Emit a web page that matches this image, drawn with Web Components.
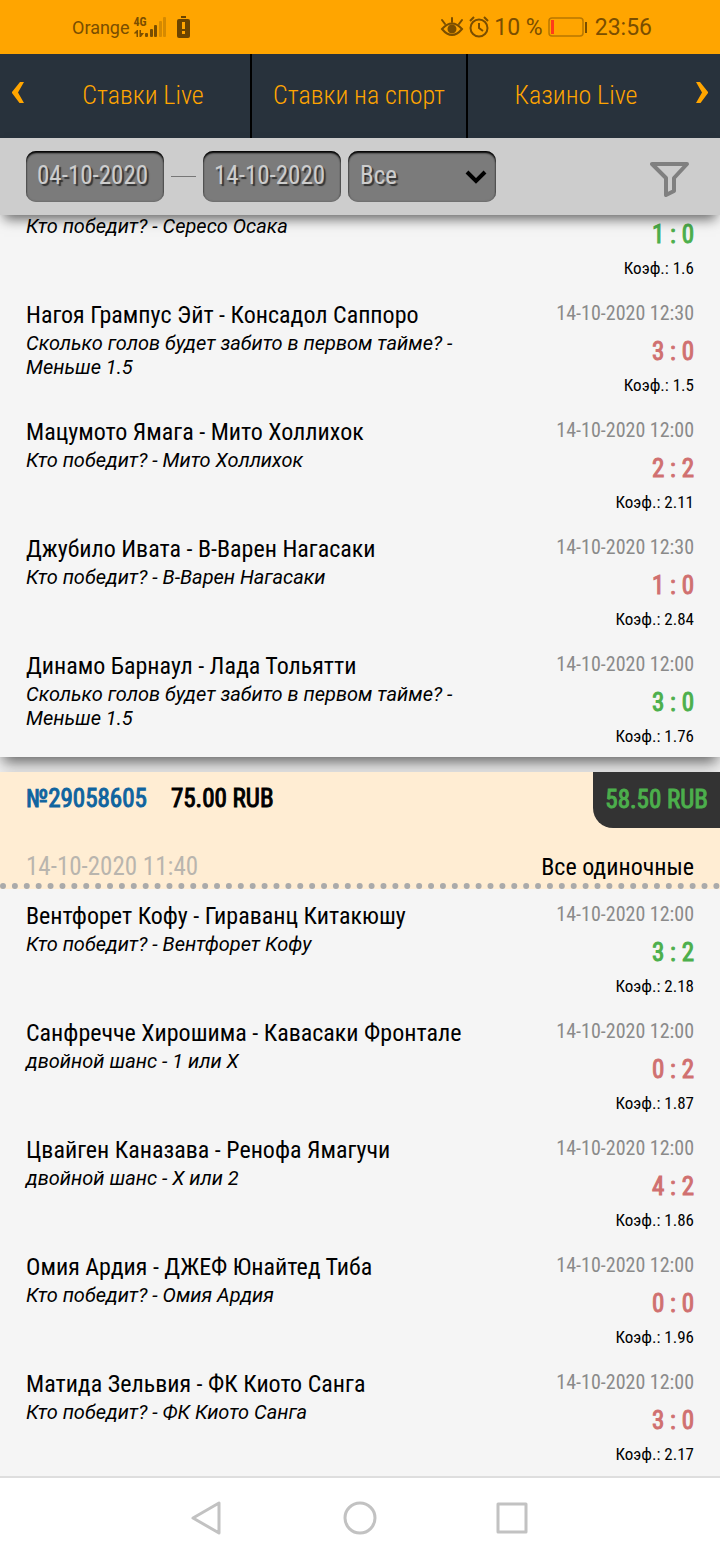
<!DOCTYPE html>
<html lang="ru">
<head>
<meta charset="utf-8">
<meta name="viewport" content="width=device-width, initial-scale=1">
<title>История ставок</title>
<style>
  html, body {
    margin: 0;
    height: 100%;
  }
  body {
    font-family: "Roboto Condensed", "Liberation Sans Narrow", Roboto, sans-serif;
    font-size: 25px;
    color: #000;
    background: #f0f0f0;
  }
</style>
</head>
<body>
<bet-app></bet-app>

<script>
/**
 * Status bar of the phone.
 */
customElements.define('status-bar',
  class extends HTMLElement {
    constructor () {
      super()
      this.attachShadow({ mode: 'open' })
      this.shadowRoot.innerHTML = `
      <style>
      :host {
        display: flex;
        justify-content: space-between;
        align-items: center;
        height: 54px;
        padding: 0 68px 0 72px;
        background: #ffa500;
        color: #7a4e00;
        font-family: Roboto, sans-serif;
        font-size: 23px;
      }
      .side {
        display: flex;
        align-items: center;
        gap: 4px;
      }
      .carrier {
        font-size: 18px;
      }
      .network {
        font: bold 12px/12px "Roboto Condensed", Roboto, sans-serif;
        align-self: flex-start;
      }
      .signal {
        display: grid;
        grid-template-columns: 33px;
      }
      .signal > * {
        grid-area: 1 / 1;
      }
      .low {
        margin-left: 6px;
      }
      svg {
        display: block;
      }
      </style>
      <div class="side">
        <span class="carrier">Orange</span>
        <div class="signal">
          <svg width="33" height="22" viewBox="0 0 33 22" fill="#7a4e00">
            <path d="M0 17l3-3h1v7H2.500v-3.500H0zM5.500 14H7v3h3l-3 4H5.500z"/>
            <rect x="11" y="17" width="3" height="4" rx="1"/>
            <rect x="16" y="13" width="3" height="8" rx="1"/>
            <rect x="20" y="9" width="3" height="12" rx="1"/>
            <g opacity=".3">
              <rect x="25" y="5" width="3" height="16" rx="1"/>
              <rect x="29" y="1" width="3" height="20" rx="1"/>
            </g>
          </svg>
          <span class="network">4G</span>
        </div>
        <svg class="low" width="13" height="22" viewBox="0 0 13 22">
          <path d="M4 0h5v2H4z" fill="#6b4400"/>
          <rect y="3" width="13" height="19" rx="2" fill="#6b4400"/>
          <path d="M5 6h3v7H5zM5 15h3v3H5z" fill="#ffa500"/>
        </svg>
      </div>
      <div class="side">
        <svg width="24" height="22" viewBox="0 0 24 22" fill="none" stroke="#7a4e00" stroke-width="2" stroke-linecap="round">
          <path d="M2 13Q12 2 22 13Q12 25 2 13z"/>
          <path d="M12 6V2M5 8L2 4M19 8l3-4"/>
          <circle cx="12" cy="13" r="3.500" fill="#7a4e00"/>
        </svg>
        <svg width="22" height="22" viewBox="0 0 22 22" fill="none" stroke="#7a4e00" stroke-width="2">
          <circle cx="11" cy="12" r="8.500"/>
          <path d="M11 7v5l4 3M2 5l4-4M20 5l-4-4"/>
        </svg>
        <span>10 %</span>
        <svg width="44" height="20" viewBox="0 0 44 20">
          <rect x="2" y="1" width="34" height="18" rx="3" fill="none" stroke="#b87700" stroke-width="1.500"/>
          <path d="M4 3h3v14H4z" fill="#ff3b1a"/>
          <path d="M38 5h2v11h-2z" fill="#7a4e00"/>
        </svg>
        <span>23:56</span>
      </div>
      `
    }
  })

/**
 * Tabs between the two arrows.
 */
customElements.define('tab-strip',
  class extends HTMLElement {
    constructor () {
      super()
      this.attachShadow({ mode: 'open' })
      this.shadowRoot.innerHTML = `
      <style>
      :host {
        display: grid;
        grid-template-columns: 36px 1fr 36px;
        height: 84px;
        background: #28323c;
      }
      nav {
        display: grid;
        grid-template-columns: repeat(3, 1fr);
      }
      a {
        display: flex;
        align-items: center;
        justify-content: center;
        padding-bottom: 2px;
        border-right: 2px solid #000;
        color: #ffa500;
        font-size: 26px;
        font-weight: 300;
        text-decoration: none;
      }
      a:last-child {
        border-right: 0;
      }
      button {
        display: flex;
        align-items: center;
        justify-content: center;
        padding: 0 0 6px;
        border: 0;
        background: none;
      }
      </style>
      <button aria-label="Назад">
        <svg width="14" height="22" viewBox="0 0 14 22" fill="#ffa500"><path d="M9 0h4L7 10.500 13 21H8.500L1 11v-1z"/></svg>
      </button>
      <nav>
        <a href="#live">Ставки Live</a>
        <a href="#sport">Ставки на спорт</a>
        <a href="#casino">Казино Live</a>
      </nav>
      <button aria-label="Вперёд">
        <svg width="14" height="22" viewBox="0 0 14 22" fill="#ffa500"><path d="M5 0H1l6 10.500L1 21h4.500L13 11v-1z"/></svg>
      </button>
      `
    }
  })

/**
 * Date range and type filter.
 */
customElements.define('bet-filter',
  class extends HTMLElement {
    constructor () {
      super()
      this.attachShadow({ mode: 'open' })
      this.shadowRoot.innerHTML = `
      <style>
      :host {
        display: flex;
        align-items: center;
        gap: 7px;
        height: 77px;
        padding: 0 30px 0 26px;
        background: #cdcdcd;
        box-shadow: 0 8px 12px -4px rgba(0, 0, 0, .6);
        position: relative;
      }
      input, select {
        box-sizing: border-box;
        width: 138px;
        height: 51px;
        margin: 0;
        padding: 0 11px 2px;
        border: 0;
        border-radius: 10px;
        background: #7b7b7b;
        box-shadow: inset 0 2px 2px #000, inset 0 0 2px #555;
        color: #cdcdcd;
        font: inherit;
        text-shadow: 2px 2px 1px #333;
        appearance: none;
      }
      .type {
        display: grid;
        align-items: center;
      }
      .type > * {
        grid-area: 1 / 1;
      }
      select {
        width: 148px;
        padding-left: 12px;
      }
      .type svg {
        justify-self: end;
        margin-right: 9px;
        pointer-events: none;
        z-index: 1;
      }
      .dash {
        width: 25px;
        height: 1px;
        background: #777;
      }
      button {
        margin-left: auto;
        padding: 4px 0 0;
        border: 0;
        background: none;
      }
      svg {
        display: block;
      }
      </style>
      <input type="text" value="04-10-2020" aria-label="С даты">
      <span class="dash"></span>
      <input type="text" value="14-10-2020" aria-label="По дату">
      <div class="type">
        <select aria-label="Тип">
          <option>Все</option>
        </select>
        <svg width="22" height="14" viewBox="0 0 22 14" fill="none" stroke="#000" stroke-width="4"><path d="M2 2l9 9 9-9"/></svg>
      </div>
      <button aria-label="Фильтр">
        <svg width="40" height="36" viewBox="0 0 40 36" fill="none" stroke="#808080" stroke-width="4" stroke-linejoin="round"><path d="M2 3h35L24 17v13l-8 4V17z"/></svg>
      </button>
      `
    }
  })

/**
 * One event of a bet slip. The slot takes the picked outcome.
 */
customElements.define('bet-event',
  class extends HTMLElement {
    constructor () {
      super()
      this.attachShadow({ mode: 'open' })
    }

    connectedCallback () {
      const get = (name) => this.getAttribute(name) || ''
      this.shadowRoot.innerHTML = `
      <style>
      :host {
        display: grid;
        grid-template-columns: 1fr auto;
        gap: 16px;
        padding: 12px 26px 11px;
      }
      .info {
        max-width: 460px;
      }
      .name {
        min-height: 28px;
        padding-bottom: 2px;
        font-size: 24px;
        line-height: 28px;
      }
      .pick {
        font: italic 20px/24px Roboto, sans-serif;
      }
      .result {
        text-align: right;
      }
      .date {
        min-height: 24px;
        font-size: 20px;
        line-height: 24px;
        color: #8a8a8a;
      }
      .score {
        padding-top: 4px;
        line-height: 46px;
        color: #d07070;
        -webkit-text-stroke: 1px;
      }
      :host([won]) .score {
        color: #4caf4c;
      }
      .odds {
        font-size: 17px;
        line-height: 20px;
      }
      </style>
      <div class="info">
        <div class="name">${get('name')}</div>
        <div class="pick"><slot></slot></div>
      </div>
      <div class="result">
        <div class="date">${get('date')}</div>
        <div class="score">${get('score')}</div>
        <div class="odds">Коэф.: ${get('odds')}</div>
      </div>
      `
    }
  })

/**
 * A bet slip. The header is shown when the slip has a number.
 */
customElements.define('bet-slip',
  class extends HTMLElement {
    constructor () {
      super()
      this.attachShadow({ mode: 'open' })
    }

    connectedCallback () {
      const get = (name) => this.getAttribute(name) || ''
      this.shadowRoot.innerHTML = `
      <style>
      :host {
        display: block;
        background: #f5f5f5;
        box-shadow: 0 8px 14px -3px rgba(0, 0, 0, .6);
      }
      header {
        display: grid;
        grid-template-columns: 1fr auto;
        align-content: space-between;
        height: 111px;
        margin-bottom: 1px;
        border-bottom: 6px dotted #aaa;
        background: #ffedd3;
      }
      .sum {
        display: flex;
        gap: 24px;
        padding-left: 26px;
        line-height: 54px;
        -webkit-text-stroke: 1px;
      }
      .number {
        color: #0f649f;
        text-decoration: none;
      }
      .payout {
        justify-self: end;
        padding: 0 12px;
        border-bottom-left-radius: 20px;
        background: #333;
        color: #4caf4c;
        line-height: 56px;
        -webkit-text-stroke: 1px;
      }
      .date, .kind {
        line-height: 32px;
      }
      .date {
        padding-left: 26px;
        color: #b9b5ae;
      }
      .kind {
        padding-right: 26px;
        font-size: 24px;
      }
      </style>
      ${get('number')
        ? `
      <header>
        <div class="sum">
          <a class="number" href="#slip">№${get('number')}</a>
          <span>${get('stake')}</span>
        </div>
        <div class="payout">${get('payout')}</div>
        <div class="date">${get('date')}</div>
        <div class="kind">${get('kind')}</div>
      </header>`
        : ''}
      <slot></slot>
      `
    }
  })

/**
 * System buttons at the bottom.
 */
customElements.define('system-bar',
  class extends HTMLElement {
    constructor () {
      super()
      this.attachShadow({ mode: 'open' })
      this.shadowRoot.innerHTML = `
      <style>
      :host {
        display: flex;
        align-items: center;
        justify-content: center;
        gap: 116px;
        height: 82px;
        border-top: 2px solid #dedede;
        background: #fff;
        position: relative;
      }
      button {
        padding: 0 0 2px;
        border: 0;
        background: none;
      }
      svg {
        display: block;
        fill: none;
        stroke: #c2c2c2;
        stroke-width: 3;
        stroke-linejoin: round;
      }
      </style>
      <button aria-label="Back"><svg width="36" height="36" viewBox="0 0 36 36"><path d="M29 3v30L3 18z"/></svg></button>
      <button aria-label="Home"><svg width="36" height="36" viewBox="0 0 36 36"><circle cx="18" cy="18" r="15"/></svg></button>
      <button aria-label="Recent"><svg width="36" height="36" viewBox="0 0 36 36"><rect x="4" y="4" width="28" height="28"/></svg></button>
      `
    }
  })

/**
 * The page: fixed bars with the scrolled history between them.
 */
customElements.define('bet-app',
  class extends HTMLElement {
    constructor () {
      super()
      this.attachShadow({ mode: 'open' })
      this.slips = [
        {
          events: [
            { pick: 'Кто победит? - Сересо Осака', score: '1 : 0', odds: '1.6', won: true },
            { name: 'Нагоя Грампус Эйт - Консадол Саппоро', pick: 'Сколько голов будет забито в первом тайме? - Меньше 1.5', date: '14-10-2020 12:30', score: '3 : 0', odds: '1.5' },
            { name: 'Мацумото Ямага - Мито Холлихок', pick: 'Кто победит? - Мито Холлихок', date: '14-10-2020 12:00', score: '2 : 2', odds: '2.11' },
            { name: 'Джубило Ивата - В-Варен Нагасаки', pick: 'Кто победит? - В-Варен Нагасаки', date: '14-10-2020 12:30', score: '1 : 0', odds: '2.84' },
            { name: 'Динамо Барнаул - Лада Тольятти', pick: 'Сколько голов будет забито в первом тайме? - Меньше 1.5', date: '14-10-2020 12:00', score: '3 : 0', odds: '1.76', won: true }
          ]
        },
        {
          number: '29058605',
          stake: '75.00 RUB',
          payout: '58.50 RUB',
          date: '14-10-2020 11:40',
          kind: 'Все одиночные',
          events: [
            { name: 'Вентфорет Кофу - Гираванц Китакюшу', pick: 'Кто победит? - Вентфорет Кофу', date: '14-10-2020 12:00', score: '3 : 2', odds: '2.18', won: true },
            { name: 'Санфречче Хирошима - Кавасаки Фронтале', pick: 'двойной шанс - 1 или X', date: '14-10-2020 12:00', score: '0 : 2', odds: '1.87' },
            { name: 'Цвайген Каназава - Ренофа Ямагучи', pick: 'двойной шанс - X или 2', date: '14-10-2020 12:00', score: '4 : 2', odds: '1.86' },
            { name: 'Омия Ардия - ДЖЕФ Юнайтед Тиба', pick: 'Кто победит? - Омия Ардия', date: '14-10-2020 12:00', score: '0 : 0', odds: '1.96' },
            { name: 'Матида Зельвия - ФК Киото Санга', pick: 'Кто победит? - ФК Киото Санга', date: '14-10-2020 12:00', score: '3 : 0', odds: '2.17' }
          ]
        }
      ]
    }

    /**
     * Runs when the element is connected to the DOM.
     */
    connectedCallback () {
      this.render()
      // the history opens scrolled down a little
      this.shadowRoot.querySelector('main').scrollTop = 43
    }

    /**
     * Turns the given fields into attributes.
     *
     * @param {object} item The slip or event.
     * @param {string[]} names The fields to use.
     * @returns {string} The attributes.
     */
    attributesOf (item, names) {
      return names.filter(n => item[n]).map(n => `${n}="${item[n]}"`).join(' ')
    }

    /**
     * Renders the page.
     */
    render () {
      this.shadowRoot.innerHTML = `
      <style>
      :host {
        display: flex;
        flex-direction: column;
        height: 100vh;
      }
      status-bar, tab-strip, bet-filter, system-bar {
        flex: none;
      }
      main {
        flex: 1;
        min-height: 0;
        overflow-y: auto;
        scrollbar-width: none;
      }
      .list {
        display: grid;
        gap: 15px;
      }
      bet-slip:last-child {
        padding-bottom: 16px;
      }
      </style>
      <status-bar></status-bar>
      <tab-strip></tab-strip>
      <bet-filter></bet-filter>
      <main>
        <div class="list">
          ${this.slips.map(slip => `
            <bet-slip ${this.attributesOf(slip, ['number', 'stake', 'payout', 'date', 'kind'])}>
              ${slip.events.map(e => `<bet-event ${this.attributesOf(e, ['name', 'date', 'score', 'odds', 'won'])}>${e.pick}</bet-event>`).join('')}
            </bet-slip>
          `).join('')}
        </div>
      </main>
      <system-bar></system-bar>
      `
    }
  })
</script>
</body>
</html>
